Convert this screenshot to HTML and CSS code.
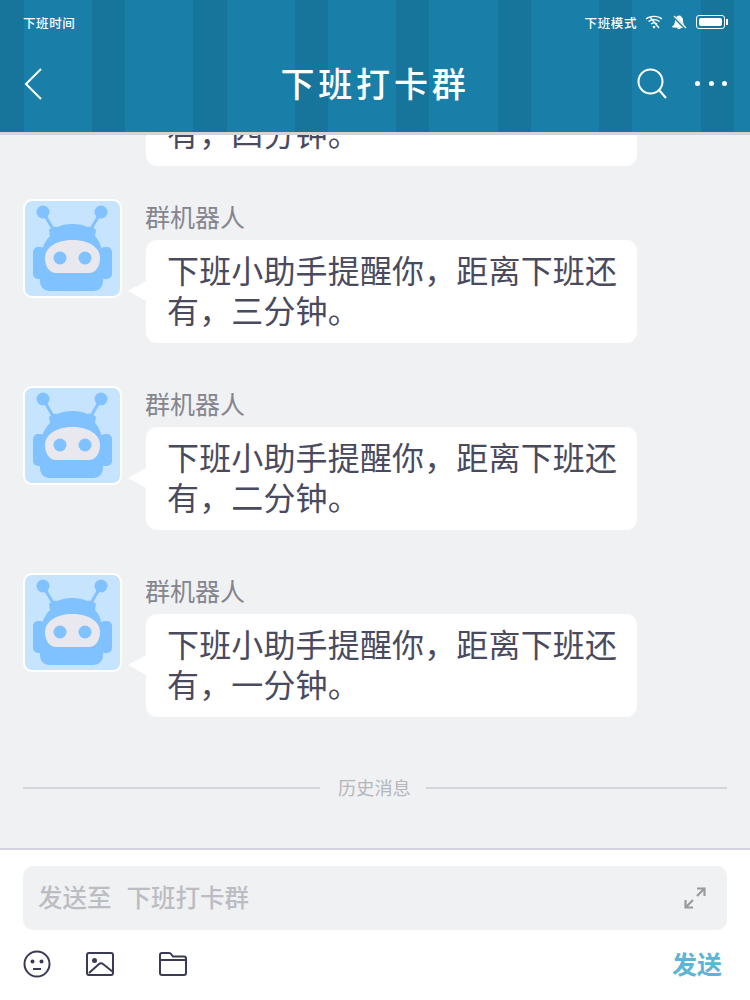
FILE: index.html
```html
<!DOCTYPE html>
<html lang="zh-CN">
<head>
  <meta charset="UTF-8" />
  <meta name="viewport" content="width=device-width, initial-scale=1" />
  <title>下班打卡群</title>
  <link rel="stylesheet" href="styles.css">
</head>
<body>
  <svg class="defs" width="0" height="0">
    <symbol id="robot" viewBox="0 0 95 95">
      <circle cx="18" cy="11" r="6.5" fill="#80c1ff" />
      <circle cx="76" cy="11" r="6.5" fill="#80c1ff" />
      <path d="M18 11 L28 28 M76 11 L66 28" stroke="#80c1ff" stroke-width="3" />
      <rect x="8" y="46" width="12" height="32" rx="5" fill="#80c1ff" />
      <rect x="75" y="46" width="12" height="32" rx="5" fill="#80c1ff" />
      <path d="M14 70 C14 50 20 40 25 35 L24 29 C26 26 30 25 33 26 C39 22 56 22 62 26 C65 25 69 26 71 29 L70 35 C75 40 79 50 79 70 L78 80 C78 86 74 90 68 90 L25 90 C19 90 15 86 15 80 Z" fill="#80c1ff" />
      <path d="M20 57 C20 46 32 39 47.5 39 C63 39 75 46 75 57 C75 66 70 72 64 72 L31 72 C25 72 20 66 20 57 Z" fill="#e8e8ee" />
      <circle cx="35" cy="57" r="6.5" fill="#80c1ff" />
      <circle cx="60" cy="57" r="6.5" fill="#80c1ff" />
    </symbol>
  </svg>

  <header class="topbar">
    <div class="status">
      <span>下班时间</span>
      <div class="status-right">
        <span>下班模式</span>
        <svg width="18" height="14" viewBox="0 0 18 14" fill="none" stroke="#fff" stroke-width="1.4">
          <path d="M1 4 C5 0.5 13 0.5 17 4 M3.5 6.5 C6.5 4 11.5 4 14.5 6.5 M6 9 C8 7.5 10 7.5 12 9 M8 11.2 L9 12.5 L10 11.2 M5 2 L14 13" />
        </svg>
        <svg width="16" height="15" viewBox="0 0 16 15" fill="none">
          <path d="M8 1 C5 1 4.5 4 4.5 6 C4.5 9 3 10 1.5 12 L14.5 12.5 C12.5 10 11.5 8 11.5 6 C11.5 3 10.5 1 8 1 Z M6.5 13.5 L9.5 13.5" fill="#fff" stroke="#fff" />
          <path d="M2 1 L15 14" stroke="#1a7fa8" stroke-width="2.6" />
          <path d="M3 1 L15 13" stroke="#fff" stroke-width="1.2" />
        </svg>
        <div class="battery"><div class="battery-fill"></div></div>
      </div>
    </div>
    <div class="navrow">
      <svg class="back" width="18" height="32" viewBox="0 0 18 32" fill="none" stroke="#fff" stroke-width="2">
        <path d="M17 1 L2 16 L17 31" />
      </svg>
      <h1>下班打卡群</h1>
      <div class="nav-actions">
        <svg width="30" height="32" viewBox="0 0 30 32" fill="none" stroke="#fff" stroke-width="2">
          <circle cx="13.5" cy="13.5" r="12" />
          <path d="M22 22 L29 30" />
        </svg>
        <div class="dots"><i></i><i></i><i></i></div>
      </div>
    </div>
  </header>

  <main class="chat">
    <div class="msg msg-cut">
      <div class="bubble-wrap">
        <div class="bubble">下班小助手提醒你，距离下班还有，四分钟。</div>
      </div>
    </div>

    <div class="msg">
      <div class="avatar"><svg width="95" height="95"><use href="#robot" /></svg></div>
      <div class="bubble-wrap">
        <div class="name">群机器人</div>
        <div class="bubble">下班小助手提醒你，距离下班还有，三分钟。</div>
      </div>
    </div>

    <div class="msg">
      <div class="avatar"><svg width="95" height="95"><use href="#robot" /></svg></div>
      <div class="bubble-wrap">
        <div class="name">群机器人</div>
        <div class="bubble">下班小助手提醒你，距离下班还有，二分钟。</div>
      </div>
    </div>

    <div class="msg">
      <div class="avatar"><svg width="95" height="95"><use href="#robot" /></svg></div>
      <div class="bubble-wrap">
        <div class="name">群机器人</div>
        <div class="bubble">下班小助手提醒你，距离下班还有，一分钟。</div>
      </div>
    </div>

    <div class="divider"><span>历史消息</span></div>
  </main>

  <footer class="composer">
    <div class="input-box">
      <span class="placeholder">发送至</span>
      <span class="placeholder">下班打卡群</span>
      <svg class="expand" width="22" height="22" viewBox="0 0 22 22" fill="none" stroke="#9a9a9e" stroke-width="2.2">
        <path d="M13 1.5 H20.5 V9 M20.5 1.5 L13 9 M9 20.5 H1.5 V13 M1.5 20.5 L9 13" />
      </svg>
    </div>
    <div class="tools">
      <svg width="28" height="28" viewBox="0 0 28 28" fill="none" stroke="#3a3a55" stroke-width="2">
        <circle cx="14" cy="14" r="12.5" />
        <circle cx="9.5" cy="11.5" r="2" fill="#3a3a55" stroke="none" />
        <circle cx="18.5" cy="11.5" r="2" fill="#3a3a55" stroke="none" />
        <path d="M10 19 H18" />
      </svg>
      <svg width="28" height="24" viewBox="0 0 28 24" fill="none" stroke="#3a3a55" stroke-width="2">
        <rect x="1" y="1" width="26" height="22" rx="2" />
        <circle cx="8.5" cy="8.5" r="2.5" fill="#3a3a55" stroke="none" />
        <path d="M3 21 L13 12 Q15 10.5 17 12 L27 20" />
      </svg>
      <svg class="folder" width="28" height="24" viewBox="0 0 28 24" fill="none" stroke="#3a3a55" stroke-width="2">
        <path d="M1 21 V3 Q1 1 3 1 H10 Q11.5 1 12.5 2.5 L14 4.5 H25 Q27 4.5 27 6.5 V21 Q27 23 25 23 H3 Q1 23 1 21 Z M1 8 H27" />
      </svg>
      <span class="send">发送</span>
    </div>
  </footer>
</body>
</html>
```

FILE: styles.css
```css
* {
  box-sizing: border-box;
}

html, body {
  height: 100%;
}

body {
  margin: 0;
  display: flex;
  flex-direction: column;
  height: 1000px;
  overflow: hidden;
  background-color: #f0f1f3;
  font-family: "Noto Sans CJK SC", "Noto Sans", sans-serif;
}

.defs {
  position: absolute;
}

/* top bar */
.topbar {
  flex: none;
  height: 135px;
  color: #fff;
  border-bottom: 3px solid #d0d5da;
  background-color: #1a7fa8;
  background-image: repeating-linear-gradient(90deg, #17749a -9.5px, #17749a 23.5px, #1a7fa8 23.5px, #1a7fa8 92px);
}

.status {
  display: flex;
  justify-content: space-between;
  align-items: center;
  height: 44px;
  padding: 0 23px;
  font-size: 12.5px;
  font-weight: 500;
  letter-spacing: 0.6px;
}

.status-right {
  display: flex;
  align-items: center;
  gap: 8px;
}

.battery {
  position: relative;
  width: 29px;
  height: 14px;
  margin-left: 1px;
  margin-right: 2px;
  padding: 2px;
  border: 1.5px solid #fff;
  border-radius: 3px;
}

.battery::after {
  content: "";
  position: absolute;
  right: -4px;
  top: 2.5px;
  width: 2px;
  height: 6px;
  background: #fff;
}

.battery-fill {
  width: 100%;
  height: 100%;
  background: #fff;
  border-radius: 2px;
}

.navrow {
  position: relative;
  display: flex;
  align-items: center;
  justify-content: space-between;
  height: 80px;
  padding: 0 23px 0 24px;
}

.navrow h1 {
  position: absolute;
  left: 0;
  right: 0;
  margin: 0 0 3px;
  text-align: center;
  font-size: 34px;
  font-weight: 500;
  letter-spacing: 3.8px;
}

.nav-actions {
  display: flex;
  align-items: center;
  gap: 28px;
}

.dots {
  display: flex;
  gap: 8.5px;
  margin-bottom: 2px;
}

.dots i {
  width: 5px;
  height: 5px;
  border-radius: 50%;
  background: #fff;
}

/* messages */
.chat {
  flex: 1;
  min-height: 0;
  display: flex;
  flex-direction: column;
  justify-content: flex-end;
  overflow: hidden;
  padding: 0 23px;
}

.msg {
  flex: none;
  display: flex;
  margin-bottom: 43px;
}

.msg-cut {
  padding-left: 123px;
  margin-bottom: 33px;
}

.avatar {
  flex: none;
  width: 99px;
  height: 99px;
  padding: 0;
  display: flex;
  align-items: center;
  justify-content: center;
  background: #c7e4ff;
  border: 2px solid #fff;
  border-radius: 9px;
}

.bubble-wrap {
  margin-left: 24px;
  width: 491px;
}

.msg-cut .bubble-wrap {
  margin-left: 0;
}

.name {
  height: 41px;
  margin-left: -1px;
  font-size: 25px;
  line-height: 34px;
  color: #85858f;
}

.bubble {
  position: relative;
  padding: 10px 19px 14px 21px;
  background: #fff;
  border-radius: 11px;
  font-size: 32px;
  letter-spacing: 0.15px;
  line-height: 39.5px;
  color: #4a4a5e;
}

.msg .name + .bubble::before {
  content: "";
  position: absolute;
  left: -18px;
  top: 41px;
  border: 10px solid transparent;
  border-left: 0;
  border-right: 18px solid #fff;
}

.divider {
  flex: none;
  display: flex;
  align-items: center;
  gap: 18px;
  height: 30px;
  margin-top: 13px;
  margin-bottom: 45px;
  font-size: 18.2px;
  color: #b4b6bc;
}

.divider span {
  margin-top: -2px;
}

.divider::before,
.divider::after {
  content: "";
  height: 2px;
  background: #d3d6da;
}

.divider::before {
  flex: none;
  width: 297px;
}

.divider::after {
  flex: 1;
  margin-left: -3px;
}

/* composer */
.composer {
  flex: none;
  height: 152px;
  padding: 16px 23px 0;
  background: #fff;
  border-top: 2px solid #d3d3e0;
}

.input-box {
  display: flex;
  align-items: center;
  gap: 15px;
  height: 64px;
  padding: 0 21px 0 15px;
  background: #f0f1f3;
  border-radius: 10px;
}

.placeholder {
  font-size: 24.5px;
  font-weight: 500;
  margin-bottom: 3px;
  color: #bcbdc2;
}

.expand {
  margin-left: auto;
}

.tools {
  display: flex;
  align-items: center;
  height: 26px;
  margin-top: 21px;
}

.tools svg + svg {
  margin-left: 35px;
}

.tools svg.folder {
  margin-left: 45px;
}

.send {
  margin-left: auto;
  margin-right: 5px;
  margin-bottom: 2px;
  font-size: 25px;
  font-weight: 700;
  color: #5cb5d6;
}
```
